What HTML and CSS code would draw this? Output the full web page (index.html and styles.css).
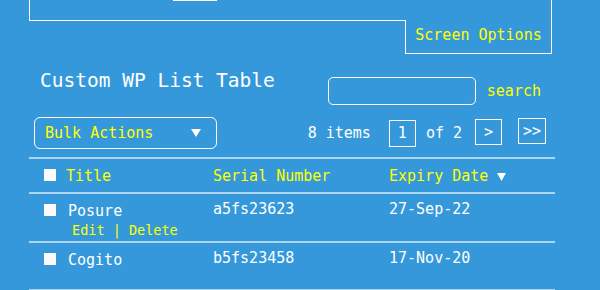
FILE: index.html
```html
<!DOCTYPE html>
<html lang="en">
<head>
    <meta charset="UTF-8">
    <meta name="viewport" content="width=device-width, initial-scale=1.0">
    <title>Custom WP List Table</title>
    <link rel="stylesheet" href="styles.css">
</head>

<body>
    <div class="screen-meta">
        <div class="meta-field"></div>
    </div>
    <div class="screen-links">
        <div class="screen-tab">Screen Options</div>
    </div>

    <div class="wrap">
        <div class="title-row">
            <h1>Custom WP List Table</h1>
            <div class="search-box">
                <input type="text" class="search-input">
                <span class="search-label">search</span>
            </div>
        </div>

        <div class="tablenav">
            <div class="bulk">
                <span>Bulk Actions</span>
                <svg width="10" height="8" viewBox="0 0 10 8"><polygon points="0,0 10,0 5,8" fill="#fff"/></svg>
            </div>
            <div class="pages">
                <span class="count">8 items</span>
                <span class="page-box current">1</span>
                <span class="of">of 2</span>
                <span class="page-box next">&gt;</span>
                <span class="page-box last">&gt;&gt;</span>
            </div>
        </div>

        <div class="list">
            <div class="row head">
                <div class="cell col-title"><span class="check"></span><span>Title</span></div>
                <div class="cell">Serial Number</div>
                <div class="cell">Expiry Date <svg width="9" height="8" viewBox="0 0 9 8"><polygon points="0,0 9,0 4.5,8" fill="#fff"/></svg></div>
            </div>
            <div class="row item">
                <div class="cell col-title">
                    <span class="check"></span>
                    <div>
                        <div class="name">Posure</div>
                        <div class="actions">Edit | Delete</div>
                    </div>
                </div>
                <div class="cell">a5fs23623</div>
                <div class="cell">27-Sep-22</div>
            </div>
            <div class="row item last-row">
                <div class="cell col-title">
                    <span class="check"></span>
                    <div>
                        <div class="name">Cogito</div>
                    </div>
                </div>
                <div class="cell">b5fs23458</div>
                <div class="cell">17-Nov-20</div>
            </div>
        </div>
    </div>
</body>

</html>
```

FILE: styles.css
```css
body {
    font-family: "DejaVu Sans Mono", monospace;
    font-size: 15px;
    line-height: 18px;
    margin: 0;
    color: #fff;
    background-color: #3598db;
}
.screen-meta {
    margin-left: 29px;
    width: 523px;
    height: 21px;
    box-sizing: border-box;
    border: 1px solid #fff;
    border-top: none;
}
.meta-field {
    width: 44px;
    height: 0;
    margin-left: 143px;
    border-bottom: 1px solid #fff;
}
.screen-links {
    display: flex;
    justify-content: flex-end;
    margin-left: 29px;
    width: 523px;
}
.screen-tab {
    width: 147px;
    height: 34px;
    box-sizing: border-box;
    margin-top: -1px;
    padding-top: 6px;
    text-align: center;
    color: #ffff00;
    background-color: #3598db;
    border: 1px solid #fff;
    border-top: none;
}
.wrap {
    margin-left: 29px;
    width: 526px;
}
.title-row {
    display: flex;
    align-items: flex-start;
}
h1 {
    margin: 15px 0 0;
    padding-left: 11px;
    font-size: 19.5px;
    line-height: 23px;
    font-weight: normal;
}
.search-box {
    display: flex;
    align-items: center;
    margin: 23px 0 0 auto;
    padding-right: 14px;
}
.search-input {
    width: 148px;
    height: 28px;
    box-sizing: border-box;
    border: 1px solid #fff;
    border-radius: 5px;
    background: transparent;
}
.search-label {
    margin-left: 11px;
    color: #ffff00;
}
.tablenav {
    display: flex;
    align-items: center;
    height: 32px;
    margin-top: 12px;
}
.bulk {
    display: flex;
    justify-content: space-between;
    align-items: center;
    width: 183px;
    height: 32px;
    box-sizing: border-box;
    margin-left: 5px;
    padding: 0 15px 0 10px;
    color: #ffff00;
    border: 1px solid #fff;
    border-radius: 6px;
}
.pages {
    display: flex;
    align-items: center;
    margin-left: auto;
    padding-right: 9px;
}
.count {
    margin-right: 18px;
}
.of {
    margin: 0 13px 0 10px;
}
.page-box {
    display: flex;
    justify-content: center;
    align-items: center;
    width: 27px;
    height: 27px;
    box-sizing: border-box;
    border: 1px solid #fff;
}
.next {
    height: 26px;
    margin-bottom: 2px;
}
.last {
    width: 28px;
    height: 26px;
    margin-left: 16px;
    margin-bottom: 5px;
}
.list {
    margin-top: 8px;
    border-top: 2px solid rgba(255, 255, 255, 0.6);
}
.row {
    display: grid;
    grid-template-columns: 184px 176px 166px;
    border-bottom: 2px solid rgba(255, 255, 255, 0.6);
}
.head {
    height: 33px;
    color: #ffff00;
}
.head .cell {
    padding-top: 8px;
}
.item {
    height: 47px;
}
.last-row {
    height: 46px;
}
.item .cell {
    padding-top: 6px;
}
.item .col-title {
    padding-top: 8px;
}
.col-title {
    display: flex;
    align-items: flex-start;
    padding-left: 15px;
}
.check {
    flex: none;
    width: 12px;
    height: 12px;
    margin: 2px 12px 0 0;
    background-color: #fafafa;
}
.head .check {
    margin-right: 10px;
}
.actions {
    margin: 2px 0 0 4px;
    font-size: 13.5px;
    line-height: 16px;
    color: #ffff00;
}
```
